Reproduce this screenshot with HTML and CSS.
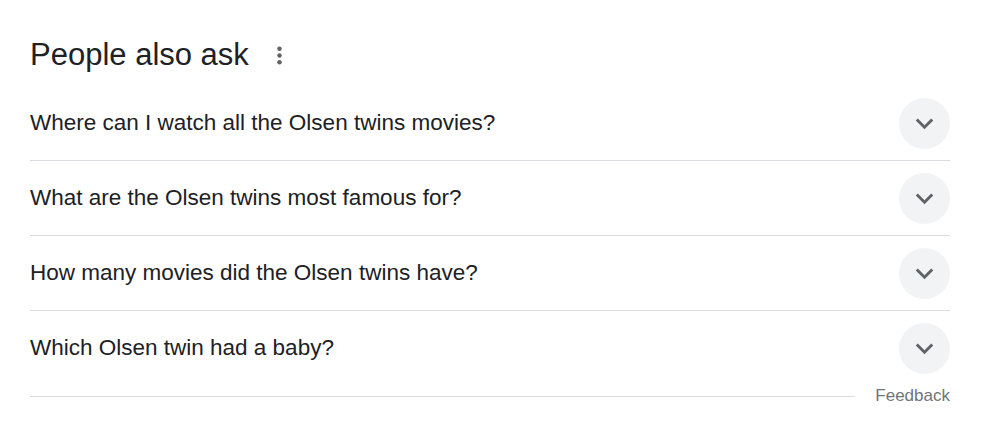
FILE: index.html
```html
<!DOCTYPE html>
<html>
<head>
<meta charset="utf-8">
<link rel="stylesheet" href="styles.css">
</head>
<body>
<div class="paa">
  <div class="paa-head">
    <h2 class="paa-title">People also ask</h2>
    <svg class="more" viewBox="0 0 24 24" width="27" height="27"><circle cx="12" cy="6" r="2"/><circle cx="12" cy="12" r="2"/><circle cx="12" cy="18" r="2"/></svg>
  </div>
  <div class="paa-list">
    <div class="q">
      <span class="q-text">Where can I watch all the Olsen twins movies?</span>
      <span class="q-btn"><svg viewBox="0 0 24 24" width="35" height="35"><path d="M16.59 8.59L12 13.17 7.41 8.59 6 10l6 6 6-6z"/></svg></span>
    </div>
    <div class="q">
      <span class="q-text">What are the Olsen twins most famous for?</span>
      <span class="q-btn"><svg viewBox="0 0 24 24" width="35" height="35"><path d="M16.59 8.59L12 13.17 7.41 8.59 6 10l6 6 6-6z"/></svg></span>
    </div>
    <div class="q">
      <span class="q-text">How many movies did the Olsen twins have?</span>
      <span class="q-btn"><svg viewBox="0 0 24 24" width="35" height="35"><path d="M16.59 8.59L12 13.17 7.41 8.59 6 10l6 6 6-6z"/></svg></span>
    </div>
    <div class="q q-last">
      <span class="q-text">Which Olsen twin had a baby?</span>
      <span class="q-btn"><svg viewBox="0 0 24 24" width="35" height="35"><path d="M16.59 8.59L12 13.17 7.41 8.59 6 10l6 6 6-6z"/></svg></span>
    </div>
  </div>
  <div class="feedback-row">
    <div class="feedback-line"></div>
    <span class="feedback">Feedback</span>
  </div>
</div>
</body>
</html>
```

FILE: styles.css
```css
html, body {
  margin: 0;
  padding: 0;
  background: #fff;
}
body {
  font-family: Arial, "Liberation Sans", sans-serif;
  color: #202124;
}
.paa {
  width: 920px;
  margin-left: 30px;
  padding-top: 35px;
}
.paa-head {
  display: flex;
  align-items: center;
  height: 40px;
  margin-bottom: 11px;
}
.paa-title {
  margin: 0;
  font-size: 31px;
  font-weight: normal;
  line-height: 40px;
  color: #202124;
}
.more {
  fill: #5f6368;
  margin-left: 17px;
}
.q {
  display: flex;
  align-items: center;
  justify-content: space-between;
  height: 74px;
  border-bottom: 1px solid #dadce0;
}
.q-last {
  border-bottom: none;
}
.q-text {
  font-size: 22.5px;
  line-height: 30px;
}
.q-btn {
  width: 51px;
  height: 51px;
  border-radius: 50%;
  background: #f1f3f4;
  display: flex;
  align-items: center;
  justify-content: center;
}
.q-btn svg {
  fill: #5f6368;
}
.feedback-row {
  display: flex;
  align-items: center;
  height: 22px;
  margin-top: 0;
}
.feedback-line {
  flex: 1;
  height: 1px;
  background: #dadce0;
  margin-right: 20px;
}
.feedback {
  font-size: 17px;
  line-height: 22px;
  color: #70757a;
}
```
